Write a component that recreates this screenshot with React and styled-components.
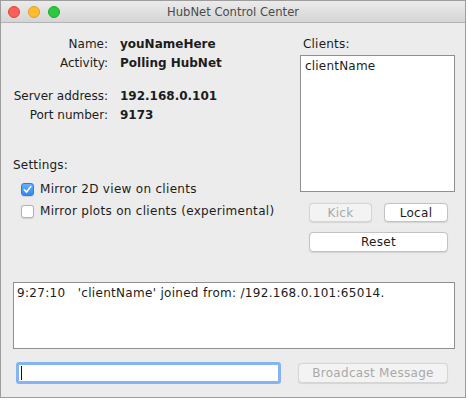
import styled, { createGlobalStyle } from "styled-components";

const GlobalStyle = createGlobalStyle`
	html, body {
		margin: 0;
		padding: 0;
		background: #ffffff;
	}
	* {
		box-sizing: border-box;
	}
`;

const Window = styled.div`
	width: 466px;
	height: 398px;
	border: 1px solid #9d9d9d;
	background: #ececec;
	display: flex;
	flex-direction: column;
	font-family: "DejaVu Sans", "Liberation Sans", sans-serif;
	font-size: 12px;
	color: #1c1c1c;
`;

const TitleBar = styled.div`
	height: 22px;
	flex: none;
	display: flex;
	align-items: center;
	justify-content: center;
	position: relative;
	background: linear-gradient(#ebebeb, #d5d5d5);
	border-bottom: 1px solid #b3b3b3;
	color: #4b4b4b;
	font-size: 11.6px;
`;

const Lights = styled.div`
	position: absolute;
	left: 7px;
	top: 5px;
	display: flex;
	gap: 8px;
`;

const Light = styled.span`
	width: 12px;
	height: 12px;
	border-radius: 50%;
	background: ${(p) => p.color};
	border: 0.5px solid ${(p) => p.edge};
`;

const Body = styled.div`
	flex: 1;
	display: flex;
	flex-direction: column;
	padding: 12px 10px 0 12px;
`;

const Top = styled.div`
	display: flex;
`;

const LeftCol = styled.div`
	width: 287px;
	display: flex;
	flex-direction: column;
`;

const InfoGrid = styled.div`
	display: grid;
	grid-template-columns: 95px auto;
	column-gap: 12px;
	line-height: 19px;
`;

const Label = styled.div`
	text-align: right;
	margin-top: ${(p) => (p.gap ? "14px" : "0")};
`;

const Value = styled.div`
	font-weight: bold;
	margin-top: ${(p) => (p.gap ? "14px" : "0")};
`;

const SettingsLabel = styled.div`
	line-height: 19px;
	margin-top: 31px;
	margin-bottom: 3px;
	letter-spacing: 0.2px;
`;

const CheckRow = styled.label`
	display: flex;
	align-items: center;
	gap: 6px;
	height: 22px;
	padding-left: 8px;
	letter-spacing: 0.3px;
`;

const Box = styled.span`
	width: 13px;
	height: 13px;
	border-radius: 3px;
	display: flex;
	align-items: center;
	justify-content: center;
	background: ${(p) =>
		p.checked ? "linear-gradient(#68b0fb, #2f88f3)" : "#ffffff"};
	border: 1px solid ${(p) => (p.checked ? "#2f7de0" : "#b3b3b3")};
	box-shadow: 0 0.5px 1px rgba(0, 0, 0, 0.12);
`;

const RightCol = styled.div`
	flex: 1;
	display: flex;
	flex-direction: column;
`;

const ClientsLabel = styled.div`
	line-height: 19px;
	padding-left: 3px;
	letter-spacing: 0.2px;
`;

const ClientList = styled.div`
	margin-top: 1px;
	height: 137px;
	background: #ffffff;
	border: 1px solid #8f8f8f;
	padding: 2px 4px;
	line-height: 17px;
	letter-spacing: 0.2px;
`;

const ButtonGrid = styled.div`
	display: grid;
	grid-template-columns: 63px 64px;
	column-gap: 12px;
	row-gap: 10px;
	margin: 11px 7px 0 9px;
`;

const Btn = styled.button`
	height: ${(p) => (p.tall ? "20px" : "19px")};
	grid-column: ${(p) => (p.wide ? "1 / 3" : "auto")};
	font-family: inherit;
	font-size: 12px;
	letter-spacing: 0.3px;
	padding: 0;
	border-radius: 4px;
	border: 1px solid ${(p) => (p.disabled ? "#d6d6d6" : "#c3c3c3")};
	background: ${(p) => (p.disabled ? "#f3f3f3" : "#ffffff")};
	color: ${(p) => (p.disabled ? "#a9a9a9" : "#1c1c1c")};
	box-shadow: 0 0.5px 1px rgba(0, 0, 0, 0.1);
`;

const LogBox = styled.div`
	margin-top: 30px;
	height: 67px;
	background: #ffffff;
	border: 1px solid #8f8f8f;
	padding: 2px 3px;
	line-height: 17px;
	white-space: pre;
	letter-spacing: 0.3px;
`;

const InputRow = styled.div`
	display: flex;
	align-items: center;
	margin-top: 13px;
	padding-left: 3px;
`;

const Field = styled.div`
	width: 265px;
	height: 22px;
	border: 3px solid #86b3f2;
	border-radius: 3px;
	background: #ffffff;
	display: flex;
	align-items: center;
	padding-left: 2px;
`;

const Caret = styled.span`
	width: 1px;
	height: 14px;
	background: #111111;
`;

const Broadcast = styled(Btn)`
	width: 150px;
	height: 20px;
	margin-left: 17px;
`;

function Check() {
	return (
		<svg width="9" height="9" viewBox="0 0 9 9">
			<path
				d="M1.3 4.8 L3.6 7.1 L7.8 1.6"
				fill="none"
				stroke="#ffffff"
				strokeWidth="1.6"
				strokeLinecap="round"
				strokeLinejoin="round"
			/>
		</svg>
	);
}

export default function App() {
	return (
		<>
			<GlobalStyle />
			<Window>
				<TitleBar>
					<Lights>
						<Light color="#fc5f57" edge="#e0443e" />
						<Light color="#fdbc2e" edge="#dea123" />
						<Light color="#2bc840" edge="#1aab29" />
					</Lights>
					HubNet Control Center
				</TitleBar>
				<Body>
					<Top>
						<LeftCol>
							<InfoGrid>
								<Label>Name:</Label>
								<Value>youNameHere</Value>
								<Label>Activity:</Label>
								<Value>Polling HubNet</Value>
								<Label gap>Server address:</Label>
								<Value gap>192.168.0.101</Value>
								<Label>Port number:</Label>
								<Value>9173</Value>
							</InfoGrid>
							<SettingsLabel>Settings:</SettingsLabel>
							<CheckRow>
								<Box checked>
									<Check />
								</Box>
								Mirror 2D view on clients
							</CheckRow>
							<CheckRow>
								<Box />
								Mirror plots on clients (experimental)
							</CheckRow>
						</LeftCol>
						<RightCol>
							<ClientsLabel>Clients:</ClientsLabel>
							<ClientList>clientName</ClientList>
							<ButtonGrid>
								<Btn disabled>Kick</Btn>
								<Btn>Local</Btn>
								<Btn wide tall>
									Reset
								</Btn>
							</ButtonGrid>
						</RightCol>
					</Top>
					<LogBox>
						{"9:27:10   'clientName' joined from: /192.168.0.101:65014."}
					</LogBox>
					<InputRow>
						<Field>
							<Caret />
						</Field>
						<Broadcast disabled>Broadcast Message</Broadcast>
					</InputRow>
				</Body>
			</Window>
		</>
	);
}
